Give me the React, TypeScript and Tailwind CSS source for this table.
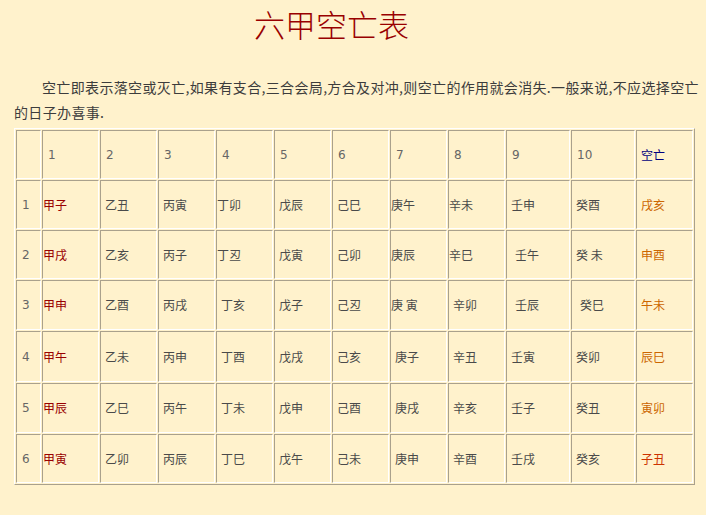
import React from "react";

type Pad = "n" | "a" | "w";
type Cell = [string, Pad];

const rows: Cell[][] = [
  [["甲子", "n"], ["乙丑", "a"], ["丙寅", "a"], ["丁卯", "n"], ["戊辰", "a"], ["己巳", "a"], ["庚午", "n"], ["辛未", "n"], ["壬申", "a"], ["癸酉", "a"], ["戌亥", "a"]],
  [["甲戌", "n"], ["乙亥", "a"], ["丙子", "a"], ["丁丒", "n"], ["戊寅", "a"], ["己卯", "a"], ["庚辰", "n"], ["辛巳", "n"], ["壬午", "w"], ["癸 未", "a"], ["申酉", "a"]],
  [["甲申", "n"], ["乙酉", "a"], ["丙戌", "a"], ["丁亥", "a"], ["戊子", "a"], ["己丒", "a"], ["庚 寅", "n"], ["辛卯", "a"], ["壬辰", "w"], ["癸巳", "w"], ["午未", "a"]],
  [["甲午", "n"], ["乙未", "a"], ["丙申", "a"], ["丁酉", "a"], ["戊戌", "a"], ["己亥", "a"], ["庚子", "a"], ["辛丑", "a"], ["壬寅", "a"], ["癸卯", "a"], ["辰巳", "a"]],
  [["甲辰", "n"], ["乙巳", "a"], ["丙午", "a"], ["丁未", "a"], ["戊申", "a"], ["己酉", "a"], ["庚戌", "a"], ["辛亥", "a"], ["壬子", "a"], ["癸丑", "a"], ["寅卯", "a"]],
  [["甲寅", "n"], ["乙卯", "a"], ["丙辰", "a"], ["丁巳", "a"], ["戊午", "a"], ["己未", "a"], ["庚申", "a"], ["辛酉", "a"], ["壬戌", "a"], ["癸亥", "a"], ["子丑", "a"]],
];

const padClass: Record<Pad, string> = {
  n: "pl-0",
  a: "pl-[4px]",
  w: "pl-[8px]",
};

const cellBase =
  "flex items-center border border-t-[#aaa18c] border-l-[#aaa18c] border-b-white border-r-white whitespace-pre";

export default function App() {
  return (
    <div className="min-h-[515px] w-[706px] bg-[#fff2cc] pl-[14px] pt-[4px] font-['DejaVu_Sans','Noto_Sans_CJK_SC',sans-serif]">
      <div className="h-[40px] pl-[240px] font-['Noto_Sans_CJK_SC',sans-serif] text-[31px] font-light leading-[40px] text-[#990000]">
        六甲空亡表
      </div>
      <p className="mt-[31px] w-[692px] font-['Noto_Sans_CJK_SC',sans-serif] text-[14px] leading-[25px] tracking-[0.35px] text-[#3c3c3c]">
        <span className="block whitespace-nowrap pl-[28px]">
          空亡即表示落空或灭亡,如果有支合,三合会局,方合及对冲,则空亡的作用就会消失.一般来说,不应选择空亡
        </span>
        <span className="block">的日子办喜事.</span>
      </p>
      <div className="mt-[3px] grid w-[681px] grid-cols-[25px_57px_57px_57px_57px_57px_57px_57px_57px_64px_64px_57px] grid-rows-[49px_49px_49px_50px_51px_50px_49px] gap-px border border-t-white border-l-white border-r-[#aaa18c] border-b-[#aaa18c] p-px text-[12px] text-[#4a4a4a]">
        <div className={cellBase}></div>
        {["1", "2", "3", "4", "5", "6", "7", "8", "9", "10"].map((n) => (
          <div key={n} className={`${cellBase} pl-[5px] text-[#666]`}>
            {n}
          </div>
        ))}
        <div className={`${cellBase} pl-[4px] font-['Noto_Sans_CJK_SC',sans-serif] text-[#000080]`}>
          空亡
        </div>
        {rows.map((row, ri) => (
          <React.Fragment key={ri}>
            <div className={`${cellBase} pl-[5px] text-[#666]`}>{ri + 1}</div>
            {row.map(([t, p], ci) => {
              let color = "";
              if (ci === 0) color = "text-[#990000]";
              else if (ci === 10) color = ri === 5 ? "text-[#cc3300]" : "text-[#cc6600]";
              return (
                <div
                  key={ci}
                  className={`${cellBase} ${padClass[p]} ${color} font-['Noto_Sans_CJK_SC',sans-serif]`}
                >
                  {t}
                </div>
              );
            })}
          </React.Fragment>
        ))}
      </div>
    </div>
  );
}
